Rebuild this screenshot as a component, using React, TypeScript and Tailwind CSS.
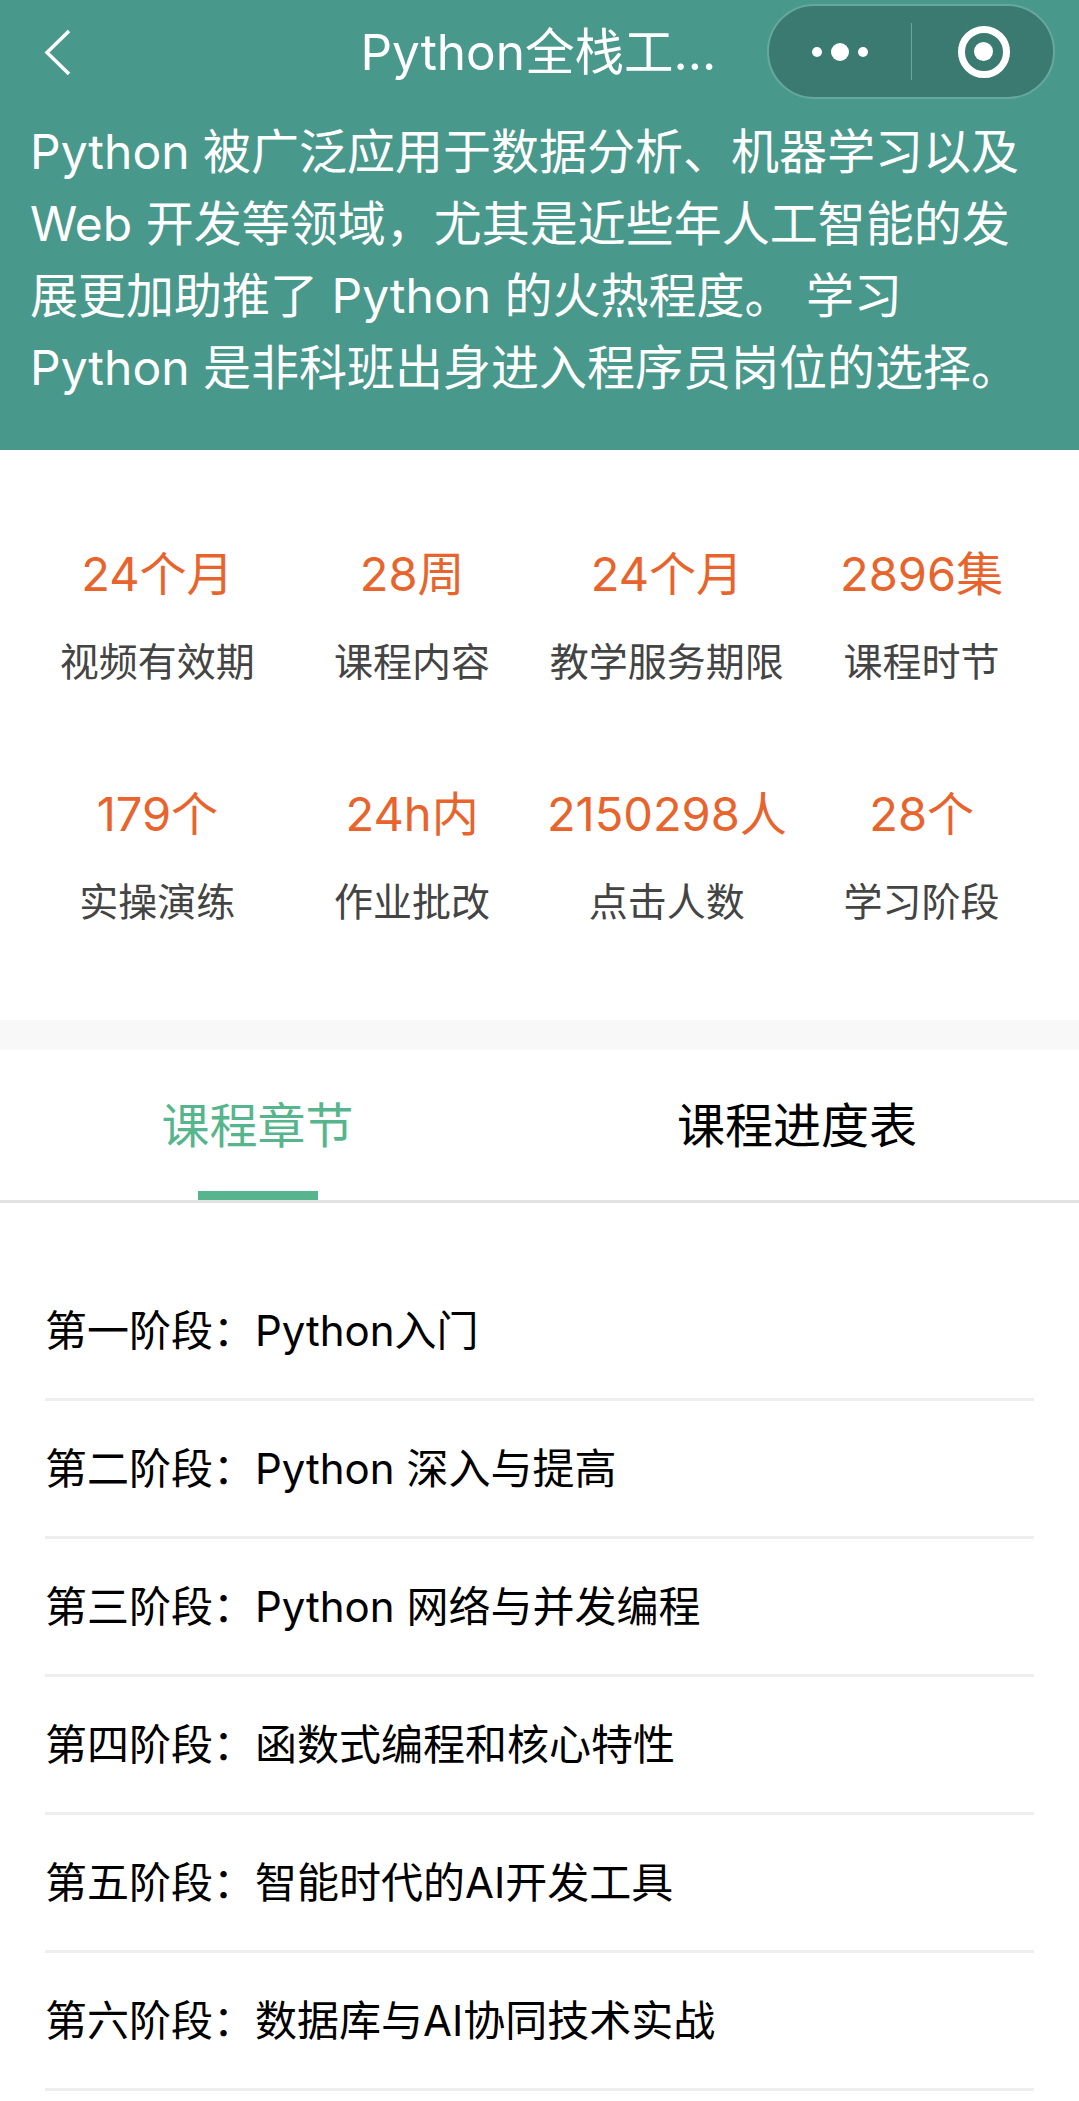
const stats = [
  { value: "24个月", label: "视频有效期" },
  { value: "28周", label: "课程内容" },
  { value: "24个月", label: "教学服务期限" },
  { value: "2896集", label: "课程时节" },
  { value: "179个", label: "实操演练" },
  { value: "24h内", label: "作业批改" },
  { value: "2150298人", label: "点击人数" },
  { value: "28个", label: "学习阶段" },
];

const chapters = [
  "第一阶段：Python入门",
  "第二阶段：Python 深入与提高",
  "第三阶段：Python 网络与并发编程",
  "第四阶段：函数式编程和核心特性",
  "第五阶段：智能时代的AI开发工具",
  "第六阶段：数据库与AI协同技术实战",
];

function NavBar() {
  return (
    <div className="grid grid-cols-[1fr_auto_1fr] items-center h-[104px]">
      <svg width="36" height="48" viewBox="0 0 36 48" fill="none" className="ml-[38px]">
        <path d="M31 3 L9 24.5 L31 46" stroke="white" strokeWidth="3.5" />
      </svg>
      <div className="w-[358px] whitespace-nowrap text-[49.5px] leading-[60px] text-white">
        Python全栈工...
      </div>
      <div className="justify-self-end mr-[24px] -mt-px w-[288px] h-[95px] rounded-full bg-[#3b7a70] border-2 border-[#66a89d] flex items-center">
        <div className="flex-1 flex items-center justify-center gap-[9px]">
          <span className="w-[10px] h-[10px] rounded-full bg-white" />
          <span className="w-[18px] h-[18px] rounded-full bg-white" />
          <span className="w-[10px] h-[10px] rounded-full bg-white" />
        </div>
        <div className="w-px h-[57px] bg-[#66a89d]" />
        <div className="flex-1 flex items-center justify-center">
          <span className="ml-[3px] w-[52px] h-[52px] rounded-full border-[7px] border-white flex items-center justify-center">
            <span className="w-[19px] h-[19px] rounded-full bg-white" />
          </span>
        </div>
      </div>
    </div>
  );
}

export default function App() {
  return (
    <div className="w-[1079px] h-[2101px] overflow-hidden bg-white font-['Inter','Noto_Sans_CJK_SC',sans-serif]">
      {/* Header */}
      <div className="h-[450px] bg-[#49988c]">
        <NavBar />
        <p className="px-[30px] pt-[12px] text-[48px] leading-[72px] text-white">
          Python 被广泛应用于数据分析、机器学习以及 Web 开发等领域，尤其是近些年人工智能的发展更加助推了 Python 的火热程度。 学习 Python 是非科班出身进入程序员岗位的选择。
        </p>
      </div>

      {/* Stats */}
      <div className="h-[570px] px-[30px] pt-[48px] grid grid-cols-4 auto-rows-[240px]">
        {stats.map((s) => (
          <div key={s.label} className="flex flex-col items-center justify-center gap-[32px]">
            <div className="text-[47px] leading-[56px] text-[#e8642c]">{s.value}</div>
            <div className="text-[39px] leading-[56px] text-[#444444]">{s.label}</div>
          </div>
        ))}
      </div>

      <div className="h-[30px] bg-[#f8f8f8]" />

      {/* Tabs */}
      <div className="flex h-[153px] border-b-[3px] border-[#e3e3e3]">
        <div className="w-[515px] flex flex-col items-center justify-between pt-[46px]">
          <span className="text-[48px] leading-[60px] text-[#56b58c]">课程章节</span>
          <span className="w-[120px] h-[9px] bg-[#56b58c]" />
        </div>
        <div className="flex-1 pt-[46px] text-center">
          <span className="text-[48px] leading-[60px] text-black">课程进度表</span>
        </div>
      </div>

      {/* Chapter list */}
      <div className="px-[45px] pt-[60px]">
        {chapters.map((c) => (
          <div key={c} className="h-[138px] flex items-center border-b-[3px] border-[#eeeeee] text-[42px] text-black">
            {c}
          </div>
        ))}
      </div>
    </div>
  );
}
